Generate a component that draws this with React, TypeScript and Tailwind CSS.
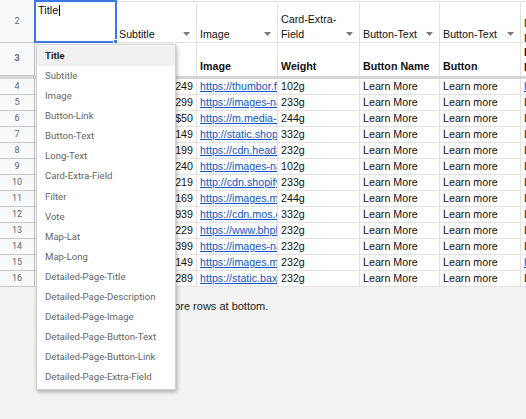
import React from "react";

const W = [81, 81, 81, 82, 80, 81];

const data: [string, string, string][] = [
  ["$249", "https://thumbor.forbes.com/thumbor", "102g"],
  ["$299", "https://images-na.ssl-images-amazon.com", "233g"],
  ["$50", "https://m.media-amazon.com/images", "244g"],
  ["$149", "http://static.shopify.com/files", "332g"],
  ["$199", "https://cdn.head-fi.org/images", "232g"],
  ["$240", "https://images-na.ssl-images-amazon.com", "102g"],
  ["$219", "http://cdn.shopify.com/s/files", "233g"],
  ["$169", "https://images.mobilefun.co.uk", "244g"],
  ["$939", "https://cdn.mos.cms.futurecdn.net", "332g"],
  ["$229", "https://www.bhphotovideo.com/images", "232g"],
  ["$399", "https://images-na.ssl-images-amazon.com", "232g"],
  ["$149", "https://images.m.media.com", "232g"],
  ["$289", "https://static.bax-shop.co.uk", "232g"],
];

const menu = [
  "Title",
  "Subtitle",
  "Image",
  "Button-Link",
  "Button-Text",
  "Long-Text",
  "Card-Extra-Field",
  "Filter",
  "Vote",
  "Map-Lat",
  "Map-Long",
  "Detailed-Page-Title",
  "Detailed-Page-Description",
  "Detailed-Page-Image",
  "Detailed-Page-Button-Text",
  "Detailed-Page-Button-Link",
  "Detailed-Page-Extra-Field",
];

function Arrow() {
  return (
    <svg width="7" height="4" viewBox="0 0 7 4" className="shrink-0">
      <path d="M0 0h7L3.5 4z" fill="#7a7a7a" />
    </svg>
  );
}

function HeadCell({ w, text }: { w: number; text: string }) {
  return (
    <div
      className="flex shrink-0 items-end justify-between gap-1 overflow-hidden border-r border-b border-[#e2e2e2] bg-white pr-[6px] pl-[3px] leading-[15px]"
      style={{ width: w }}
    >
      <span className="break-words">{text}</span>
      <span className="mb-[6px]">
        <Arrow />
      </span>
    </div>
  );
}

function RowNum({ n, h }: { n: number; h: string }) {
  return (
    <div
      className={`flex w-[35px] shrink-0 items-center justify-center border-r border-b border-[#c8c8c8] bg-[#f8f9fa] text-[9px] text-[#666] ${h}`}
      style={{ fontFamily: "Roboto, Arial, sans-serif" }}
    >
      {n}
    </div>
  );
}

function Cell({ w, children, right }: { w: number; children: React.ReactNode; right?: boolean }) {
  return (
    <div
      className={`h-[16px] shrink-0 overflow-hidden whitespace-nowrap border-r border-b border-[#e2e2e2] bg-white px-[3px] leading-[15px] ${right ? "text-right" : ""}`}
      style={{ width: w }}
    >
      {children}
    </div>
  );
}

export default function App() {
  return (
    <div
      className="relative h-[419px] w-[526px] overflow-hidden bg-[#f3f3f3] text-[10.7px] text-[#111]"
      style={{ fontFamily: "Arial, 'Liberation Sans', sans-serif" }}
    >
      {/* top sliver of row 1 */}
      <div className="flex h-[2px]">
        <div className="w-[35px] shrink-0 border-r border-[#c8c8c8] bg-[#f8f9fa]" />
        <div className="flex-1 border-b border-[#e2e2e2] bg-white" />
      </div>

      {/* row 2 */}
      <div className="flex h-[41px]">
        <RowNum n={2} h="h-[41px]" />
        <div className="relative w-[81px] shrink-0 border-r border-b border-[#e2e2e2] bg-white">
          <div className="absolute -top-[2px] -left-[1px] h-[43px] w-[83px] border-2 border-[#3b78e7] bg-white px-[2px] pt-[1px] text-[11px] leading-[15px]">
            Title<span className="ml-[1px] inline-block h-[11px] w-px translate-y-[2px] bg-black" />
            <div className="absolute -right-[3px] -bottom-[3px] h-[5px] w-[5px] border border-white bg-[#3b78e7]" />
          </div>
        </div>
        <HeadCell w={W[1]} text="Subtitle" />
        <HeadCell w={W[2]} text="Image" />
        <HeadCell w={W[3]} text="Card-Extra-Field" />
        <HeadCell w={W[4]} text="Button-Text" />
        <HeadCell w={W[5]} text="Button-Text" />
        <div className="flex-1 overflow-hidden border-b border-[#e2e2e2] bg-white px-[3px] pt-[14px] leading-[15px]">
          Detailed-Page-Button-Link
        </div>
      </div>

      {/* row 3 */}
      <div className="flex h-[33px] font-bold">
        <RowNum n={3} h="h-[33px]" />
        {["", "", "Image", "Weight", "Button Name", "Button"].map((t, i) => (
          <div
            key={i}
            className="flex shrink-0 items-end overflow-hidden whitespace-nowrap border-r border-[#e2e2e2] bg-white px-[3px] pb-[2px] leading-[15px]"
            style={{ width: W[i] }}
          >
            {t}
          </div>
        ))}
        <div className="flex-1 overflow-hidden bg-white px-[3px] pt-[2px] leading-[15px]">
          Learn More Link Here
        </div>
      </div>
      <div className="h-[3px] bg-[#d3d5d6]" />

      {/* data rows */}
      {data.map((r, i) => (
        <div key={i} className="flex h-[16px]">
          <RowNum n={i + 4} h="h-[16px]" />
          <Cell w={W[0]}>Product {i + 1}</Cell>
          <Cell w={W[1]} right>
            {r[0]}
          </Cell>
          <Cell w={W[2]}>
            <span className="text-[#1155cc] underline">{r[1]}</span>
          </Cell>
          <Cell w={W[3]}>{r[2]}</Cell>
          <Cell w={W[4]}>Learn More</Cell>
          <Cell w={W[5]}>Learn more</Cell>
          <div className="h-[16px] flex-1 overflow-hidden whitespace-nowrap border-b border-[#e2e2e2] bg-white px-[3px] leading-[15px]">
            {i === 0 || i === 11 ? (
              <span className="text-[#1155cc] underline">https://example.com</span>
            ) : (
              "Lorem ipsum"
            )}
          </div>
        </div>
      ))}

      {/* add rows */}
      <div className="pt-[11px] pl-[165px] text-[11px] text-[#222]">more rows at bottom.</div>

      {/* dropdown menu */}
      <div
        className="absolute top-[44px] left-[36px] w-[140px] border border-[#d0d0d0] bg-white py-px text-[9.6px] text-[#666] shadow-[1px_2px_4px_rgba(0,0,0,0.3)]"
        style={{ fontFamily: "Roboto, Arial, sans-serif" }}
      >
        {menu.map((m, i) => (
          <div
            key={m}
            className={`flex h-[20.1px] items-center px-[8px] ${i === 0 ? "bg-[#f1f1f1] font-bold text-[#222]" : ""}`}
          >
            {m}
          </div>
        ))}
      </div>
    </div>
  );
}
